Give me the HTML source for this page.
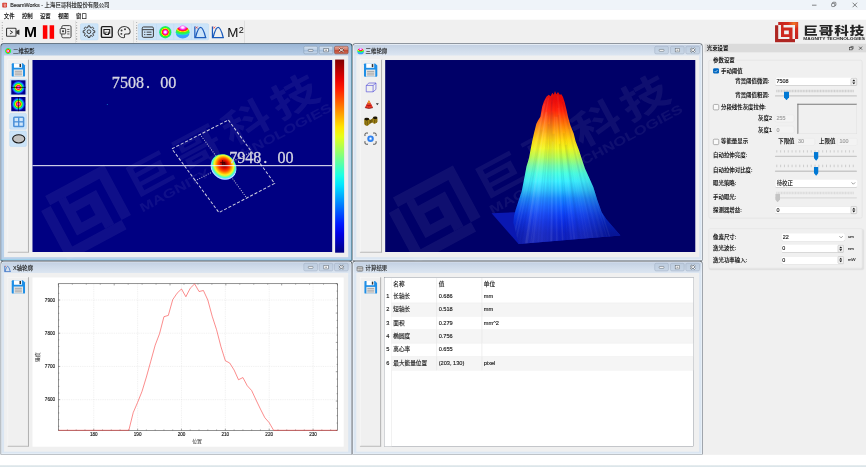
<!DOCTYPE html><html lang="zh-CN"><head><meta charset="utf-8"><title>BeamWorks - 上海巨哥科技股份有限公司</title><style>
html,body{margin:0;padding:0;background:#fff;overflow:hidden}
body{width:866px;height:467px;position:relative}
#root{position:absolute;left:0;top:0;width:1920px;height:1036px;transform-origin:0 0;
transform:scale(0.451042,0.451208);font:12px/16px "Liberation Sans","Noto Sans CJK SC",sans-serif;color:#000;background:#f0f0f0;overflow:hidden;filter:opacity(1)}
#root div,#root span,.a{position:absolute;box-sizing:border-box;white-space:nowrap}
.t,td{-webkit-text-stroke:.3px currentColor}
.a{display:block;overflow:visible}
.t{font-size:12px;line-height:16px;height:16px}
.r{text-align:right}
.sub{border:1px solid #6b7480;border-radius:7px 7px 0 0}
.act{background:linear-gradient(#98b3d3 0,#a9c2df 14px,#bbd0e8 30px,#b9d1ea 31px)}
.ina{background:linear-gradient(#bfcde0 0,#cfdbea 14px,#dfe8f3 30px,#dbe6f2 31px);border-color:#8c8f94}
.cl{background:#f0f0f0}
.wb{border:1px solid #8094ab;border-radius:4px;background:linear-gradient(rgba(255,255,255,.55),rgba(255,255,255,.18) 48%,rgba(150,175,205,.25) 52%,rgba(255,255,255,.3))}
.wbi{border:1px solid #a3b2c5;border-radius:4px;background:rgba(176,194,216,.38)}
.wbc{border:1px solid #7c3a30;border-radius:4px;background:linear-gradient(#e6a899,#d27462 48%,#c04a34 52%,#cf6a52)}
.stb{background:#f0f0f0;border-right:2px solid #a9a9a9;border-bottom:2px solid #b4b4b4;border-top:1px solid #fbfbfb;border-left:1px solid #fbfbfb}
.hl{background:#cce4f9;border:1px solid #b5d6f3;border-radius:3px}
.in{background:#fff;border:1px solid #e3e3e3;border-bottom:1px solid #8a8a8a;border-radius:4px}
.ind{background:#f3f3f3;border:1px solid #e6e6e6;border-radius:4px;color:#9c9c9c}
.gb{border:1px solid #dcdcdc;border-radius:4px}
.cb{border:1px solid #5c5c5c;border-radius:3px;background:#fafafa}
.cbc{border-radius:3px;background:#0067c0}
.gr{background:#c8c8c8;border-radius:2px}
.hd{background:#0078d4;clip-path:polygon(12% 0,88% 0,100% 6%,100% 66%,50% 100%,0 66%,0 6%)}
.hdd{background:#c4c4c4;clip-path:polygon(12% 0,88% 0,100% 6%,100% 66%,50% 100%,0 66%,0 6%)}
table{border-collapse:collapse;position:absolute;font:12.500px/16px "Liberation Sans","Noto Sans CJK SC",sans-serif;color:#1a1a1a}
td{padding:0 0 0 4px;height:30px;border-right:1px solid #dcdcdc;box-sizing:border-box}
</style></head><body><div id="root"><div style="left:0px;top:0px;width:1920px;height:22px;background:#eff4f9"></div><svg class="a" style="left:4.5px;top:6px" width="10.5" height="10.5" viewBox="0 0 10 10" ><rect width="10" height="10" rx="1.500" fill="#d5392e"/><path d="M2.500 3h5v4.500h-3.500v-2.500h2" fill="none" stroke="#fff" stroke-width="1"/></svg><div class="t" style="left:23px;top:3.5px;width:420.5px;height:16px;color:#222">BeamWorks - 上海巨哥科技股份有限公司</div><svg class="a" style="left:1791.5px;top:0px" width="128.5" height="22" viewBox="0 0 128 22" ><path d="M8 11.500H18" stroke="#222" stroke-width="1.2"/><rect x="51.500" y="7.500" width="7" height="7" rx="1.500" fill="none" stroke="#222" stroke-width="1.100"/><path d="M53.500 7.500V6.500a1.500 1.500 0 0 1 1.500-1.500h4.500a1.500 1.500 0 0 1 1.500 1.500v4.500a1.500 1.500 0 0 1-1.500 1.500h-1" fill="none" stroke="#222" stroke-width="1.100"/><path d="M98 6l10 10M108 6l-10 10" stroke="#222" stroke-width="1.2"/></svg><div style="left:0px;top:22px;width:1920px;height:22px;background:#fff"></div><div class="t" style="left:8.5px;top:27px;width:31px;height:16px;">文件</div><div class="t" style="left:48.5px;top:27px;width:31px;height:16px;">控制</div><div class="t" style="left:88.5px;top:27px;width:31px;height:16px;">设置</div><div class="t" style="left:128.5px;top:27px;width:31px;height:16px;">视图</div><div class="t" style="left:168.5px;top:27px;width:31px;height:16px;">窗口</div><div style="left:0px;top:44px;width:1920px;height:51px;background:#f0f0f0"></div><div style="left:4px;top:49px;width:2px;height:42.5px;background:repeating-linear-gradient(#a8a8a8 0,#a8a8a8 1.500px,#f0f0f0 1.500px,#f0f0f0 3.500px)"></div><div style="left:169px;top:49px;width:2px;height:42.5px;background:repeating-linear-gradient(#a8a8a8 0,#a8a8a8 1.500px,#f0f0f0 1.500px,#f0f0f0 3.500px)"></div><div style="left:302px;top:49px;width:2px;height:42.5px;background:repeating-linear-gradient(#a8a8a8 0,#a8a8a8 1.500px,#f0f0f0 1.500px,#f0f0f0 3.500px)"></div><div style="left:166.5px;top:46px;width:1.5px;height:48.5px;background:#c9c9c9"></div><div style="left:296px;top:46px;width:1px;height:48.5px;background:#c9c9c9"></div><div style="left:542px;top:46px;width:1px;height:48.5px;background:#c9c9c9"></div><svg class="a" style="left:13px;top:58.5px" width="32" height="25" viewBox="0 0 32 25" ><rect x="1.500" y="3.500" width="21" height="18" rx="2" fill="none" stroke="#3a3a3a" stroke-width="2.4"/><path d="M23 9.500l7-3v12l-7-3z" fill="#3a3a3a"/><path d="M9 8.500l6 4-6 4" fill="none" stroke="#3a3a3a" stroke-width="2.2"/></svg><div style="left:53px;top:51px;width:35.5px;height:39px;font:700 31.500px/38px 'Liberation Sans',sans-serif;color:#000;transform:scaleX(1.1);transform-origin:0 0">M</div><div style="left:95px;top:55.5px;width:10px;height:30.5px;background:#f00"></div><div style="left:110px;top:55.5px;width:10px;height:30.5px;background:#f00"></div><svg class="a" style="left:131.5px;top:55px" width="27" height="30.5" viewBox="0 0 27 30" ><rect x="5" y="1.500" width="20.5" height="27" rx="3" fill="none" stroke="#444" stroke-width="2.2"/><rect x="1.500" y="8" width="12" height="12" rx="1.500" fill="#f0f0f0" stroke="#444" stroke-width="2.2"/><rect x="5.500" y="12" width="4.500" height="4" fill="#444"/><path d="M17 10h5M17 15h5M17 20h5" stroke="#444" stroke-width="2"/></svg><div class="hl" style="left:177.5px;top:52px;width:40px;height:36.5px;"></div><svg class="a" style="left:182px;top:55px" width="30.5" height="30.5" viewBox="0 0 32 32" ><g transform="translate(16 16)"><polygon points="-2.47,-9.9 -2.13,-13.43 2.13,-13.43 2.47,-9.9 5.25,-8.74 7.99,-11 11,-7.99 8.74,-5.25 9.9,-2.47 13.43,-2.13 13.43,2.13 9.9,2.47 8.74,5.25 11,7.99 7.99,11 5.25,8.74 2.47,9.9 2.13,13.43 -2.13,13.43 -2.47,9.9 -5.25,8.74 -7.99,11 -11,7.99 -8.74,5.25 -9.9,2.47 -13.43,2.13 -13.43,-2.13 -9.9,-2.47 -8.74,-5.25 -11,-7.99 -7.99,-11 -5.25,-8.74" fill="none" stroke="#3c3c3c" stroke-width="2.300" stroke-linejoin="round"/><circle r="4.300" fill="none" stroke="#3c3c3c" stroke-width="2.200"/></g></svg><svg class="a" style="left:222.5px;top:56.5px" width="27.5" height="28" viewBox="0 0 30 30" ><rect x="2" y="2" width="26" height="26" rx="3" fill="none" stroke="#1c1c1c" stroke-width="3.400"/><path d="M8 9h14v9h-3v3h-8v-3h-3z" fill="none" stroke="#1c1c1c" stroke-width="2.600"/><path d="M11 14v4M15 14v4M19 14v4" stroke="#1c1c1c" stroke-width="1.500"/></svg><svg class="a" style="left:260px;top:56.5px" width="30.5" height="28.5" viewBox="0 0 32 30" ><path d="M16 2C8 2 2 8 2 15.500S8 28 14 28c3 0 3.500-2 2.800-3.800c-1-2.600 0.500-4.700 3.200-4.700h4c4 0 6-2.500 6-6C30 7 24 2 16 2z" fill="none" stroke="#3c3c3c" stroke-width="2.400"/><circle cx="10" cy="11" r="2.300" fill="#3c3c3c"/><circle cx="18" cy="8" r="2.300" fill="#3c3c3c"/><circle cx="9.500" cy="19" r="2.300" fill="#3c3c3c"/></svg><div class="hl" style="left:306px;top:52px;width:157px;height:36.5px;"></div><div style="left:346.5px;top:52.5px;width:1px;height:35.5px;background:#b9d8f3"></div><div style="left:384.5px;top:52.5px;width:1px;height:35.5px;background:#b9d8f3"></div><div style="left:423.5px;top:52.5px;width:1px;height:35.5px;background:#b9d8f3"></div><svg class="a" style="left:313.5px;top:57.5px" width="27.5" height="26.5" viewBox="0 0 30 28" ><rect x="1.500" y="1.500" width="27" height="25" rx="3" fill="none" stroke="#3a3a3a" stroke-width="2.400"/><path d="M1.500 8h27" stroke="#3a3a3a" stroke-width="2.400"/><path d="M6 14h3M6 20h3" stroke="#3a3a3a" stroke-width="2.400"/><path d="M12 14h12M12 20h12" stroke="#3a3a3a" stroke-width="2.400"/></svg><svg class="a" style="left:351.5px;top:56.5px" width="29" height="28.5" viewBox="0 0 32 32" ><defs><radialGradient id="g1"><stop offset="0" stop-color="#ffd0ff"/><stop offset="0.14" stop-color="#ff40ff"/><stop offset="0.3" stop-color="#ff2020"/><stop offset="0.42" stop-color="#ffe000"/><stop offset="0.55" stop-color="#20e020"/><stop offset="0.68" stop-color="#00e0e0"/><stop offset="0.82" stop-color="#2040ff"/><stop offset="1" stop-color="#00008a"/></radialGradient></defs><defs><radialGradient id="g2"><stop offset="0" stop-color="#ffffff"/><stop offset="0.14" stop-color="#ffe0ff"/><stop offset="0.3" stop-color="#ff30ff"/><stop offset="0.42" stop-color="#ff1060"/><stop offset="0.5" stop-color="#ff3010"/><stop offset="0.6" stop-color="#fff000"/><stop offset="0.7" stop-color="#40f020"/><stop offset="0.9" stop-color="#20f060"/><stop offset="1" stop-color="#30e0d0"/></radialGradient></defs><circle cx="16" cy="16" r="15.5" fill="url(#g2)"/></svg><svg class="a" style="left:389px;top:55px" width="32" height="31.5" viewBox="0 0 32 30" ><defs><radialGradient id="g3" gradientUnits="userSpaceOnUse" cx="16" cy="5" r="26" gradientTransform="translate(0 1.500) scale(1 .7)"><stop offset="0" stop-color="#ffffff"/><stop offset="0.12" stop-color="#ffd0ff"/><stop offset="0.26" stop-color="#ff28f0"/><stop offset="0.38" stop-color="#ff1040"/><stop offset="0.46" stop-color="#ff5000"/><stop offset="0.53" stop-color="#fff000"/><stop offset="0.62" stop-color="#50f020"/><stop offset="0.8" stop-color="#20f070"/><stop offset="0.92" stop-color="#20d8e0"/><stop offset="1" stop-color="#38a0ff"/></radialGradient></defs><ellipse cx="16" cy="16" rx="15.500" ry="13.600" fill="url(#g3)"/><circle cx="16" cy="7.500" r="7" fill="url(#g3)"/></svg><svg class="a" style="left:428px;top:56.5px" width="31.5" height="29" viewBox="0 0 32 32" ><path d="M3 2V29H31" fill="none" stroke="#1c5cbc" stroke-width="3"/><path d="M4.500 29Q17 -21 29.500 29" fill="none" stroke="#1c5cbc" stroke-width="3.100"/><path d="M5 2l5 5M10 2l-5 5" stroke="#e03030" stroke-width="1.7"/></svg><svg class="a" style="left:466.5px;top:56.5px" width="31.5" height="29" viewBox="0 0 32 32" ><path d="M3 2V29H31" fill="none" stroke="#1c5cbc" stroke-width="3"/><path d="M4.500 29Q17 -21 29.500 29" fill="none" stroke="#1c5cbc" stroke-width="3.100"/><path d="M5 2l5 5M10 2l-5 5" stroke="#e03030" stroke-width="1.7"/></svg><div style="left:504px;top:52.5px;width:43.5px;height:36.5px;font:400 28px/37px 'Liberation Sans',sans-serif;color:#111;transform:scaleX(1.06);transform-origin:0 0">M<span style="position:relative;font-size:19px;top:-7.500px;left:0.500px">2</span></div><svg class="a" style="left:1718px;top:47.5px" width="203" height="46" viewBox="0 0 91.7 20.8" ><defs><radialGradient id="g4" cx="19" cy="2" r="13" gradientUnits="userSpaceOnUse"><stop offset="0" stop-color="#f07a28"/><stop offset=".45" stop-color="#d62a1c"/><stop offset="1" stop-color="#c42420"/></radialGradient></defs><path d="M0.1 3.7H3.3V17.5H20.1V20.65H0.1Z" fill="#ae2622"/><path d="M3.3 0.3H23.3V17.5H20.1V3.45H3.3Z" fill="url(#g4)"/><path d="M6.1 3.4H8.6V5.95H17.6V17.5H14.5V15.3H6.1ZM9.2 8.75H13.9V12.5H9.2Z" fill="#cf2a20" fill-rule="evenodd"/><text transform="translate(28.5 13.6) scale(1.26 1)" font-family='"Noto Sans CJK SC",sans-serif' font-weight="800" font-size="11.700" fill="#262626">巨</text><text transform="translate(43.95 13.6) scale(1.26 1)" font-family='"Noto Sans CJK SC",sans-serif' font-weight="800" font-size="11.700" fill="#262626">哥</text><text transform="translate(59.4 13.6) scale(1.26 1)" font-family='"Noto Sans CJK SC",sans-serif' font-weight="800" font-size="11.700" fill="#262626">科</text><text transform="translate(74.85 13.6) scale(1.26 1)" font-family='"Noto Sans CJK SC",sans-serif' font-weight="800" font-size="11.700" fill="#262626">技</text><text x="28.5" y="18.45" font-family='"Liberation Sans",sans-serif' font-weight="700" font-size="3.700" textLength="61.79" lengthAdjust="spacingAndGlyphs" fill="#262626">MAGNITY TECHNOLOGIES</text></svg><div class="sub act" style="left:1px;top:96px;width:779.5px;height:481.5px;border:0;box-shadow:inset 0 0 0 1.500px #38434e,inset -3px -3px 0 0 #86d2ec"><div class="cl" style="left:8px;top:27px;width:762.5px;height:446.5px;"></div><svg class="a" style="left:10px;top:10px" width="14" height="14" viewBox="0 0 32 32" ><defs><radialGradient id="g5"><stop offset="0" stop-color="#ffd0ff"/><stop offset="0.14" stop-color="#ff40ff"/><stop offset="0.3" stop-color="#ff2020"/><stop offset="0.42" stop-color="#ffe000"/><stop offset="0.55" stop-color="#20e020"/><stop offset="0.68" stop-color="#00e0e0"/><stop offset="0.82" stop-color="#2040ff"/><stop offset="1" stop-color="#00008a"/></radialGradient></defs><defs><radialGradient id="g6"><stop offset="0" stop-color="#ffffff"/><stop offset="0.14" stop-color="#ffe0ff"/><stop offset="0.3" stop-color="#ff30ff"/><stop offset="0.42" stop-color="#ff1060"/><stop offset="0.5" stop-color="#ff3010"/><stop offset="0.6" stop-color="#fff000"/><stop offset="0.7" stop-color="#40f020"/><stop offset="0.9" stop-color="#20f060"/><stop offset="1" stop-color="#30e0d0"/></radialGradient></defs><circle cx="16" cy="16" r="15.5" fill="url(#g6)"/></svg><div class="t" style="left:28px;top:9.5px;width:149.5px;height:16px;color:#1b1b1b">二维投影</div><svg class="a" style="left:671.5px;top:5.5px" width="31.5" height="18" viewBox="0 0 31.500 18" ><defs><linearGradient id="g7" x1="0" y1="0" x2="0" y2="1"><stop offset="0" stop-color="#fff" stop-opacity=".55"/><stop offset=".48" stop-color="#fff" stop-opacity=".2"/><stop offset=".52" stop-color="#9ab4d2" stop-opacity=".3"/><stop offset="1" stop-color="#fff" stop-opacity=".3"/></linearGradient></defs><rect x=".6" y=".6" width="30.300" height="16.800" rx="3" fill="url(#g7)" stroke="#7e93ab" stroke-width="1.100"/><rect x="10.500" y="7.500" width="10.500" height="4.200" rx="1.200" fill="#f8f8f8" stroke="#4a5866" stroke-width="1.2"/></svg><svg class="a" style="left:705.5px;top:5.5px" width="31.5" height="18" viewBox="0 0 31.500 18" ><defs><linearGradient id="g8" x1="0" y1="0" x2="0" y2="1"><stop offset="0" stop-color="#fff" stop-opacity=".55"/><stop offset=".48" stop-color="#fff" stop-opacity=".2"/><stop offset=".52" stop-color="#9ab4d2" stop-opacity=".3"/><stop offset="1" stop-color="#fff" stop-opacity=".3"/></linearGradient></defs><rect x=".6" y=".6" width="30.300" height="16.800" rx="3" fill="url(#g8)" stroke="#7e93ab" stroke-width="1.100"/><rect x="11" y="5" width="10" height="8" fill="#f8f8f8" stroke="#4a5866" stroke-width="1.2"/><rect x="14" y="8" width="4" height="2.500" fill="#4a5866" opacity=".7"/></svg><svg class="a" style="left:740px;top:5.5px" width="31.5" height="18" viewBox="0 0 31.500 18" ><defs><linearGradient id="g9" x1="0" y1="0" x2="0" y2="1"><stop offset="0" stop-color="#e8ab9c"/><stop offset=".48" stop-color="#d27562"/><stop offset=".52" stop-color="#c04a34"/><stop offset="1" stop-color="#d06c54"/></linearGradient></defs><rect x=".6" y=".6" width="30.300" height="16.800" rx="3" fill="url(#g9)" stroke="#7c3a30" stroke-width="1.100"/><path d="M11 5l10 8M21 5l-10 8" stroke="#6a2a20" stroke-width="4.2"/><path d="M11 5l10 8M21 5l-10 8" stroke="#f8f8f8" stroke-width="2.2"/></svg><div class="stb" style="left:16px;top:36px;width:47px;height:427.5px;"></div><svg class="a" style="left:24.5px;top:44px" width="29.5" height="30" viewBox="0 0 30 30" ><path d="M2 0H25L30 5V28a2 2 0 0 1-2 2H2a2 2 0 0 1-2-2V2a2 2 0 0 1 2-2z" fill="#1f8fe6"/><rect x="5" y="0" width="18" height="10" fill="#fff"/><rect x="17.5" y="1.5" width="3.5" height="7" fill="#333"/><rect x="4.500" y="14" width="21" height="16" fill="#e6e6e6"/><path d="M7 18h16M7 22h16M7 26h16" stroke="#8a8a8a" stroke-width="1.6"/></svg><div class="hl" style="left:21px;top:78.5px;width:37.5px;height:36.5px;"></div><svg class="a" style="left:24px;top:81.5px" width="31.5" height="31.5" viewBox="0 0 32 32" ><defs><radialGradient id="g10"><stop offset="0" stop-color="#ffd0ff"/><stop offset="0.14" stop-color="#ff40ff"/><stop offset="0.3" stop-color="#ff2020"/><stop offset="0.42" stop-color="#ffe000"/><stop offset="0.55" stop-color="#20e020"/><stop offset="0.68" stop-color="#00e0e0"/><stop offset="0.82" stop-color="#2040ff"/><stop offset="1" stop-color="#00008a"/></radialGradient></defs><rect width="32" height="32" fill="#00008a"/><circle cx="16" cy="16" r="15.5" fill="url(#g10)"/><path d="M0 16H32" stroke="#000" stroke-width="1.6"/></svg><svg class="a" style="left:24px;top:119px" width="31.5" height="31.5" viewBox="0 0 32 32" ><defs><radialGradient id="g11"><stop offset="0" stop-color="#ffd0ff"/><stop offset="0.14" stop-color="#ff40ff"/><stop offset="0.3" stop-color="#ff2020"/><stop offset="0.42" stop-color="#ffe000"/><stop offset="0.55" stop-color="#20e020"/><stop offset="0.68" stop-color="#00e0e0"/><stop offset="0.82" stop-color="#2040ff"/><stop offset="1" stop-color="#00008a"/></radialGradient></defs><rect width="32" height="32" fill="#00008a"/><circle cx="16" cy="16" r="15.5" fill="url(#g11)"/><path d="M16 0V32" stroke="#000" stroke-width="1.6"/></svg><div class="hl" style="left:20px;top:154.5px;width:38px;height:36px;"></div><svg class="a" style="left:26.5px;top:160.5px" width="27" height="26" viewBox="0 0 28 27" ><rect x="1" y="1" width="26" height="25" rx="3.500" fill="#4a90d9"/><rect x="4.500" y="4.500" width="8" height="7.500" fill="#cfe6fb"/><rect x="15.500" y="4.500" width="8" height="7.500" fill="#cfe6fb"/><rect x="4.500" y="15" width="8" height="7.500" fill="#cfe6fb"/><rect x="15.500" y="15" width="8" height="7.500" fill="#cfe6fb"/></svg><div class="hl" style="left:20px;top:193.5px;width:38px;height:35px;"></div><svg class="a" style="left:24.5px;top:200px" width="31" height="23.5" viewBox="0 0 31 23" ><ellipse cx="15.500" cy="11.500" rx="13.500" ry="9.200" fill="#c2c2c2" stroke="#161616" stroke-width="2.400"/></svg><svg class="a" style="left:70.5px;top:37px" width="664.5" height="425.5" viewBox="32.1 60.0 299.8 191.8" preserveAspectRatio="none"><rect x="32.1" y="60.0" width="299.8" height="191.8" fill="#000082"/><g transform="translate(223 132) rotate(-28.2) scale(3.33) translate(-59.5 -8.7)" opacity="0.06"><path d="M0.1 3.7H3.3V17.5H20.1V20.65H0.1Z" fill="#fff"/><path d="M3.3 0.3H23.3V17.5H20.1V3.45H3.3Z" fill="#fff"/><path d="M6.1 3.4H8.6V5.95H17.6V17.5H14.5V15.3H6.1ZM9.2 8.75H13.9V12.5H9.2Z" fill="#fff" fill-rule="evenodd"/><text transform="translate(26.7 13.6) scale(1.24 1)" font-family='"Noto Sans CJK SC",sans-serif' font-weight="700" font-size="11.700" fill="#fff">巨</text><text transform="translate(43.2 13.6) scale(1.24 1)" font-family='"Noto Sans CJK SC",sans-serif' font-weight="700" font-size="11.700" fill="#fff">哥</text><text transform="translate(59.7 13.6) scale(1.24 1)" font-family='"Noto Sans CJK SC",sans-serif' font-weight="700" font-size="11.700" fill="#fff">科</text><text transform="translate(76.2 13.6) scale(1.24 1)" font-family='"Noto Sans CJK SC",sans-serif' font-weight="700" font-size="11.700" fill="#fff">技</text><text x="26.7" y="18.45" font-family='"Liberation Sans",sans-serif' font-weight="700" font-size="3.700" textLength="64.94" lengthAdjust="spacingAndGlyphs" fill="#fff">MAGNITY TECHNOLOGIES</text></g><polygon points="228.1,119.9 274.3,183.3 218.6,212.4 171.6,148.7" fill="none" stroke="#cdcddf" stroke-width="1" stroke-dasharray="3.1 1.800"/><path d="M199.85 134.3L246.45 197.85" stroke="#c6c6da" stroke-width="1.050" stroke-linecap="round" stroke-dasharray=".1 2.300"/><path d="M195.1 180.55L251.2 151.6" stroke="#c6c6da" stroke-width="1.050" stroke-linecap="round" stroke-dasharray=".1 2.300"/><defs><radialGradient id="g12" cx=".46" cy=".46" r=".54" fx=".42" fy=".38"><stop offset="0" stop-color="#4a0000"/><stop offset="0.1" stop-color="#8a0000"/><stop offset="0.3" stop-color="#e81000"/><stop offset="0.45" stop-color="#ff5000"/><stop offset="0.58" stop-color="#ffb000"/><stop offset="0.68" stop-color="#fff020"/><stop offset="0.76" stop-color="#a0ff60"/><stop offset="0.83" stop-color="#40ffd0"/><stop offset="0.885" stop-color="#70d8ff"/><stop offset="0.935" stop-color="#cfe6ff"/><stop offset="0.975" stop-color="#4060f0"/><stop offset="1" stop-color="#000082"/></radialGradient></defs><g transform="translate(223.2 167.300) rotate(52)"><ellipse rx="13.800" ry="12.300" fill="url(#g12)"/><ellipse cx="-9" cy="-4" rx="5" ry="5" fill="url(#g12)" opacity=".0"/></g><path d="M219.8 162.500h5M222.300 160v5" stroke="#200000" stroke-width=".8" opacity=".8"/><rect x="32.1" y="165.05" width="299.8" height="1" fill="#f2f2fa"/><text x="111.5 119.55 127.6 135.65 145.63 151.75 159.8 167.85" y="87.6" font-family='"Liberation Serif",serif' font-size="16.1" fill="#d6d6e2" stroke="#d6d6e2" stroke-width=".3">7508. 00</text><text x="228.9 236.95 245 253.05 263.03 269.15 277.2 285.25" y="163.2" font-family='"Liberation Serif",serif' font-size="16.1" fill="#d6d6e2" stroke="#d6d6e2" stroke-width=".3">7948. 00</text><rect x="106.500" y="104" width="1" height=".7" fill="#1890d8"/></svg><svg class="a" style="left:742px;top:35.5px" width="20" height="428" viewBox="0 0 9 193" preserveAspectRatio="none"><defs><linearGradient id="g13" x1="0" y1="0" x2="0" y2="1"><stop offset="0.0" stop-color="#800000"/><stop offset="0.05" stop-color="#b30000"/><stop offset="0.1" stop-color="#e50000"/><stop offset="0.15" stop-color="#ff1a00"/><stop offset="0.2" stop-color="#ff4c00"/><stop offset="0.25" stop-color="#ff8000"/><stop offset="0.3" stop-color="#ffb300"/><stop offset="0.35" stop-color="#ffe500"/><stop offset="0.4" stop-color="#e5ff1a"/><stop offset="0.45" stop-color="#b3ff4c"/><stop offset="0.5" stop-color="#80ff80"/><stop offset="0.55" stop-color="#4cffb3"/><stop offset="0.6" stop-color="#1affe5"/><stop offset="0.65" stop-color="#00e5ff"/><stop offset="0.7" stop-color="#00b3ff"/><stop offset="0.75" stop-color="#0080ff"/><stop offset="0.8" stop-color="#004cff"/><stop offset="0.85" stop-color="#001aff"/><stop offset="0.9" stop-color="#0000e5"/><stop offset="0.95" stop-color="#0000b3"/><stop offset="1.0" stop-color="#000080"/></linearGradient></defs><rect width="9" height="193" fill="url(#g13)"/></svg></div><div class="sub ina" style="left:780.5px;top:96px;width:777px;height:481.5px;border:0;box-shadow:inset 0 0 0 1.500px #54595f,inset 0 0 0 3px #eef4fa"><div class="cl" style="left:9px;top:27px;width:760.5px;height:446.5px;"></div><svg class="a" style="left:11.5px;top:10px" width="15" height="15" viewBox="0 0 32 30" ><defs><radialGradient id="g14" gradientUnits="userSpaceOnUse" cx="16" cy="5" r="26" gradientTransform="translate(0 1.500) scale(1 .7)"><stop offset="0" stop-color="#ffffff"/><stop offset="0.12" stop-color="#ffd0ff"/><stop offset="0.26" stop-color="#ff28f0"/><stop offset="0.38" stop-color="#ff1040"/><stop offset="0.46" stop-color="#ff5000"/><stop offset="0.53" stop-color="#fff000"/><stop offset="0.62" stop-color="#50f020"/><stop offset="0.8" stop-color="#20f070"/><stop offset="0.92" stop-color="#20d8e0"/><stop offset="1" stop-color="#38a0ff"/></radialGradient></defs><ellipse cx="16" cy="16" rx="15.500" ry="13.600" fill="url(#g14)"/><circle cx="16" cy="7.500" r="7" fill="url(#g14)"/></svg><div class="t" style="left:30px;top:9.5px;width:147.5px;height:16px;color:#1b1b1b">三维轮廓</div><svg class="a" style="left:670.5px;top:5.5px" width="31.5" height="18" viewBox="0 0 31.500 18" ><rect x=".6" y=".6" width="30.300" height="16.800" rx="3" fill="#b0c2d8" fill-opacity=".38" stroke="#a0afc3" stroke-width="1.100"/><rect x="10.500" y="7.500" width="10.500" height="4.200" rx="1.200" fill="#fdfdfd" stroke="#5d6670" stroke-width="1.2"/></svg><svg class="a" style="left:705px;top:5.5px" width="31.5" height="18" viewBox="0 0 31.500 18" ><rect x=".6" y=".6" width="30.300" height="16.800" rx="3" fill="#b0c2d8" fill-opacity=".38" stroke="#a0afc3" stroke-width="1.100"/><rect x="11" y="5" width="10" height="8" fill="#fdfdfd" stroke="#5d6670" stroke-width="1.2"/><rect x="14" y="8" width="4" height="2.500" fill="#5d6670" opacity=".7"/></svg><svg class="a" style="left:739px;top:5.5px" width="31.5" height="18" viewBox="0 0 31.500 18" ><rect x=".6" y=".6" width="30.300" height="16.800" rx="3" fill="#b0c2d8" fill-opacity=".38" stroke="#a0afc3" stroke-width="1.100"/><path d="M11 5l10 8M21 5l-10 8" stroke="#5d6670" stroke-width="4.2"/><path d="M11 5l10 8M21 5l-10 8" stroke="#fdfdfd" stroke-width="2.2"/></svg><div class="stb" style="left:17.5px;top:36px;width:48.5px;height:427.5px;"></div><svg class="a" style="left:26.5px;top:44px" width="29.5" height="30.5" viewBox="0 0 30 30" ><path d="M2 0H25L30 5V28a2 2 0 0 1-2 2H2a2 2 0 0 1-2-2V2a2 2 0 0 1 2-2z" fill="#1f8fe6"/><rect x="5" y="0" width="18" height="10" fill="#fff"/><rect x="17.5" y="1.5" width="3.5" height="7" fill="#333"/><rect x="4.500" y="14" width="21" height="16" fill="#e6e6e6"/><path d="M7 18h16M7 22h16M7 26h16" stroke="#8a8a8a" stroke-width="1.6"/></svg><svg class="a" style="left:30.5px;top:86.5px" width="23.5" height="21.5" viewBox="0 0 24 22" ><path d="M1 6.500H16.500V21H1zM1 6.500L7 1H23L16.500 6.500M23 1V15.500L16.500 21" fill="none" stroke="#4a46d8" stroke-width="1.400"/></svg><svg class="a" style="left:27.5px;top:125px" width="20" height="20" viewBox="0 0 20 20" ><path d="M10 1L1 17.500Q10 21.500 19 17.500Z" fill="#e02020"/><path d="M10 1L6.500 7.500Q10 9 13.500 7.500Z" fill="#e8a030"/><path d="M4.500 11.500Q10 14 15.500 11.500" stroke="#8c1010" stroke-width="1.500" fill="none"/><path d="M7 9.500h2v2h-2zM11.500 9.500h2v2h-2zM5 15h2.500v2h-2.500zM9.500 15.500h2.500v2h-2.500zM13.500 15h2.500v2h-2.500z" fill="#f07030"/><path d="M1 17.500Q10 21.500 19 17.500" stroke="#500808" stroke-width="1.200" fill="none"/></svg><svg class="a" style="left:52px;top:132.5px" width="7" height="4" viewBox="0 0 6 3.600" ><path d="M0 0H6L3 3.600Z" fill="#333"/></svg><svg class="a" style="left:25.5px;top:160.5px" width="32.5" height="23" viewBox="0 0 32 22" ><path d="M2 7Q7 2 12 6L15 10L21 3Q26 -1 30 4V13Q26 18 21 15L17 12L12 19Q7 23 2 18Z" fill="#7d6410"/><path d="M2 8Q7 12 12 7V19Q7 23 2 18ZM21 5Q26 8 30 5V13Q26 18 21 15Z" fill="#a88a18"/><path d="M5 11V20M9 11V20M24 7.500V15.500M27.500 7V14.500" stroke="#4a3a08" stroke-width="1.300"/><ellipse cx="7" cy="6.500" rx="5.200" ry="3" fill="#1c1606"/><ellipse cx="25.500" cy="3.800" rx="4.800" ry="2.800" fill="#1c1606"/><path d="M12 9L20 6L21 13L13 17Z" fill="#8f7414"/><path d="M15 8.500V15.500M18 7.500V14" stroke="#4a3a08" stroke-width="1.200"/></svg><svg class="a" style="left:26.5px;top:197px" width="29" height="28.5" viewBox="0 0 30 30" ><path d="M2 9V5a3 3 0 0 1 3-3h4M21 2h4a3 3 0 0 1 3 3v4M28 21v4a3 3 0 0 1-3 3h-4M9 28H5a3 3 0 0 1-3-3v-4" fill="none" stroke="#444" stroke-width="2.200"/><circle cx="15" cy="15" r="7.600" fill="#2f80ee"/><circle cx="15" cy="15" r="3.600" fill="#8cc0ff"/><circle cx="15" cy="15" r="1.800" fill="#fff"/></svg><svg class="a" style="left:73px;top:36.5px" width="687.5" height="425.5" viewBox="384.8 59.8 310.1 191.9" preserveAspectRatio="none"><defs><linearGradient id="g15" gradientUnits="userSpaceOnUse" x1="0" y1="91.0" x2="0" y2="244.0"><stop offset="0.000" stop-color="#d80000"/><stop offset="0.059" stop-color="#ea0000"/><stop offset="0.124" stop-color="#ff1800"/><stop offset="0.190" stop-color="#ff5a00"/><stop offset="0.255" stop-color="#ff9a00"/><stop offset="0.320" stop-color="#ffd800"/><stop offset="0.373" stop-color="#f0f810"/><stop offset="0.431" stop-color="#b4ff48"/><stop offset="0.484" stop-color="#70ffa0"/><stop offset="0.536" stop-color="#40ffe0"/><stop offset="0.588" stop-color="#30f0ff"/><stop offset="0.647" stop-color="#20c0ff"/><stop offset="0.699" stop-color="#1084ff"/><stop offset="0.752" stop-color="#0c5cff"/><stop offset="0.804" stop-color="#083cf4"/><stop offset="0.856" stop-color="#0628e0"/><stop offset="0.922" stop-color="#081cc4"/><stop offset="1.000" stop-color="#0a18b4"/></linearGradient><linearGradient id="g16" gradientUnits="userSpaceOnUse" x1="510" y1="0" x2="606" y2="0"><stop offset="0" stop-color="#000" stop-opacity=".10"/><stop offset=".3" stop-color="#fff" stop-opacity=".10"/><stop offset=".55" stop-color="#fff" stop-opacity=".02"/><stop offset="1" stop-color="#000" stop-opacity=".22"/></linearGradient></defs><rect x="384.8" y="59.8" width="310.1" height="191.9" fill="#000068"/><g transform="translate(574.5 132.2) rotate(-28.2) scale(3.4) translate(-59.5 -8.7)" opacity="0.06"><path d="M0.1 3.7H3.3V17.5H20.1V20.65H0.1Z" fill="#fff"/><path d="M3.3 0.3H23.3V17.5H20.1V3.45H3.3Z" fill="#fff"/><path d="M6.1 3.4H8.6V5.95H17.6V17.5H14.5V15.3H6.1ZM9.2 8.75H13.9V12.5H9.2Z" fill="#fff" fill-rule="evenodd"/><text transform="translate(26.7 13.6) scale(1.24 1)" font-family='"Noto Sans CJK SC",sans-serif' font-weight="700" font-size="11.700" fill="#fff">巨</text><text transform="translate(42.85 13.6) scale(1.24 1)" font-family='"Noto Sans CJK SC",sans-serif' font-weight="700" font-size="11.700" fill="#fff">哥</text><text transform="translate(59 13.6) scale(1.24 1)" font-family='"Noto Sans CJK SC",sans-serif' font-weight="700" font-size="11.700" fill="#fff">科</text><text transform="translate(75.15 13.6) scale(1.24 1)" font-family='"Noto Sans CJK SC",sans-serif' font-weight="700" font-size="11.700" fill="#fff">技</text><text x="26.7" y="18.45" font-family='"Liberation Sans",sans-serif' font-weight="700" font-size="3.700" textLength="63.89" lengthAdjust="spacingAndGlyphs" fill="#fff">MAGNITY TECHNOLOGIES</text></g><path d="M491.200 213L518.200 243.800L620 235.200L596 208.500Z" fill="#0a18b2"/><defs><clipPath id="g17"><path d="M554.6 90.8L553.4 94.5L552 92.6L550.2 96L548.4 94.6L546 96.6L543.6 101L541.8 106.2L540.6 113L540 116.6L537.5 120.5L535.9 123.8L533.6 133L531.7 141.5L528.6 158.1L526.1 166.2L523.5 180L521.3 191.2L518 201L515.1 209.9L513.6 216L513 222.4L518.2 243.8L620 235.2L606 219L601.3 212L597 200L593 187L589 178L584.7 168.5L581.5 159L578.5 149.8L575.2 141L573.3 133.2L570 125L567.6 116.6L566 109L564.3 102L562.6 96.8L561 94L559.4 94.4L557.6 91.8L556 94Z"/></clipPath></defs><path d="M554.6 90.8L553.4 94.5L552 92.6L550.2 96L548.4 94.6L546 96.6L543.6 101L541.8 106.2L540.6 113L540 116.6L537.5 120.5L535.9 123.8L533.6 133L531.7 141.5L528.6 158.1L526.1 166.2L523.5 180L521.3 191.2L518 201L515.1 209.9L513.6 216L513 222.4L518.2 243.8L620 235.2L606 219L601.3 212L597 200L593 187L589 178L584.7 168.5L581.5 159L578.5 149.8L575.2 141L573.3 133.2L570 125L567.6 116.6L566 109L564.3 102L562.6 96.8L561 94L559.4 94.4L557.6 91.8L556 94Z" fill="url(#g15)"/><path d="M554.6 90.8L553.4 94.5L552 92.6L550.2 96L548.4 94.6L546 96.6L543.6 101L541.8 106.2L540.6 113L540 116.6L537.5 120.5L535.9 123.8L533.6 133L531.7 141.5L528.6 158.1L526.1 166.2L523.5 180L521.3 191.2L518 201L515.1 209.9L513.6 216L513 222.4L518.2 243.8L620 235.2L606 219L601.3 212L597 200L593 187L589 178L584.7 168.5L581.5 159L578.5 149.8L575.2 141L573.3 133.2L570 125L567.6 116.6L566 109L564.3 102L562.6 96.8L561 94L559.4 94.4L557.6 91.8L556 94Z" fill="url(#g16)"/><g clip-path="url(#g17)"><path d="M544.12 103.3L511.65 244" stroke="#fff" stroke-opacity="0.06" stroke-width="1.86" fill="none"/><path d="M545.91 98.19L514.73 244" stroke="#fff" stroke-opacity="0.05" stroke-width="1.69" fill="none"/><path d="M546.02 99.99L517.14 244" stroke="#001060" stroke-opacity="0.05" stroke-width="1.20" fill="none"/><path d="M541.24 129.51L520.45 244" stroke="#001060" stroke-opacity="0.07" stroke-width="1.63" fill="none"/><path d="M548 97.56L524.95 244" stroke="#fff" stroke-opacity="0.07" stroke-width="1.23" fill="none"/><path d="M546.05 111.97L526.24 244" stroke="#fff" stroke-opacity="0.07" stroke-width="1.93" fill="none"/><path d="M546.7 115.48L530.28 244" stroke="#fff" stroke-opacity="0.05" stroke-width="1.10" fill="none"/><path d="M545.32 132.42L532.41 244" stroke="#fff" stroke-opacity="0.05" stroke-width="1.94" fill="none"/><path d="M548.73 111.49L535.91 244" stroke="#001060" stroke-opacity="0.06" stroke-width="1.39" fill="none"/><path d="M548.61 123.89L539.15 244" stroke="#001060" stroke-opacity="0.07" stroke-width="1.46" fill="none"/><path d="M551.22 101.49L542.96 244" stroke="#001060" stroke-opacity="0.05" stroke-width="1.24" fill="none"/><path d="M551.85 97.16L544.98 244" stroke="#001060" stroke-opacity="0.06" stroke-width="1.92" fill="none"/><path d="M552.17 112.26L548.75 244" stroke="#001060" stroke-opacity="0.06" stroke-width="1.93" fill="none"/><path d="M552.35 141.2L550.91 244" stroke="#fff" stroke-opacity="0.07" stroke-width="2.06" fill="none"/><path d="M553.32 133.58L553.12 244" stroke="#001060" stroke-opacity="0.06" stroke-width="2.32" fill="none"/><path d="M554.37 116.22L556.57 244" stroke="#fff" stroke-opacity="0.06" stroke-width="1.74" fill="none"/><path d="M554.7 101.44L559.34 244" stroke="#001060" stroke-opacity="0.03" stroke-width="1.21" fill="none"/><path d="M556.14 116.5L562.5 244" stroke="#fff" stroke-opacity="0.07" stroke-width="1.72" fill="none"/><path d="M559.13 143.59L566.1 244" stroke="#001060" stroke-opacity="0.07" stroke-width="1.45" fill="none"/><path d="M557.87 114.73L568.83 244" stroke="#001060" stroke-opacity="0.07" stroke-width="1.24" fill="none"/><path d="M557.9 107.76L571.35 244" stroke="#fff" stroke-opacity="0.04" stroke-width="1.94" fill="none"/><path d="M557.2 95.23L574.53 244" stroke="#fff" stroke-opacity="0.05" stroke-width="1.91" fill="none"/><path d="M563.37 132.98L578.91 244" stroke="#001060" stroke-opacity="0.05" stroke-width="2.08" fill="none"/><path d="M565.55 144.47L580.11 244" stroke="#001060" stroke-opacity="0.06" stroke-width="2.28" fill="none"/><path d="M562.54 116.94L583.78 244" stroke="#001060" stroke-opacity="0.03" stroke-width="1.10" fill="none"/><path d="M561.33 106.48L586.13 244" stroke="#fff" stroke-opacity="0.03" stroke-width="1.08" fill="none"/><path d="M561.39 103.32L589 244" stroke="#fff" stroke-opacity="0.03" stroke-width="1.04" fill="none"/><path d="M568.2 128.77L593.75 244" stroke="#fff" stroke-opacity="0.03" stroke-width="1.56" fill="none"/><path d="M562.53 101.76L595.73 244" stroke="#001060" stroke-opacity="0.07" stroke-width="1.75" fill="none"/><path d="M562.7 99.72L598.97 244" stroke="#fff" stroke-opacity="0.03" stroke-width="1.42" fill="none"/><path d="M564.6 103.88L602.66 244" stroke="#001060" stroke-opacity="0.03" stroke-width="1.85" fill="none"/><path d="M570.95 124.87L604.29 244" stroke="#fff" stroke-opacity="0.03" stroke-width="2.57" fill="none"/><path d="M575.08 133.29L608.73 244" stroke="#fff" stroke-opacity="0.04" stroke-width="1.27" fill="none"/><path d="M573.25 124.29L611.54 244" stroke="#fff" stroke-opacity="0.06" stroke-width="1.36" fill="none"/></g></svg></div><div class="sub ina" style="left:1px;top:577.5px;width:779.5px;height:430.5px;border:0;box-shadow:inset 0 0 0 1.500px #54595f,inset 0 0 0 3px #eef4fa"><div class="cl" style="left:8px;top:27px;width:762.5px;height:396px;"></div><svg class="a" style="left:8px;top:10px" width="15" height="15.5" viewBox="0 0 32 32" ><path d="M3 2V29H31" fill="none" stroke="#1c5cbc" stroke-width="3"/><path d="M4.500 29Q17 -21 29.500 29" fill="none" stroke="#1c5cbc" stroke-width="3.100"/><path d="M5 2l5 5M10 2l-5 5" stroke="#e03030" stroke-width="1.7"/></svg><div class="t" style="left:28px;top:9.5px;width:149.5px;height:16px;color:#1b1b1b">X轴轮廓</div><svg class="a" style="left:671.5px;top:5.5px" width="31.5" height="18" viewBox="0 0 31.500 18" ><rect x=".6" y=".6" width="30.300" height="16.800" rx="3" fill="#b0c2d8" fill-opacity=".38" stroke="#a0afc3" stroke-width="1.100"/><rect x="10.500" y="7.500" width="10.500" height="4.200" rx="1.200" fill="#fdfdfd" stroke="#5d6670" stroke-width="1.2"/></svg><svg class="a" style="left:705.5px;top:5.5px" width="31.5" height="18" viewBox="0 0 31.500 18" ><rect x=".6" y=".6" width="30.300" height="16.800" rx="3" fill="#b0c2d8" fill-opacity=".38" stroke="#a0afc3" stroke-width="1.100"/><rect x="11" y="5" width="10" height="8" fill="#fdfdfd" stroke="#5d6670" stroke-width="1.2"/><rect x="14" y="8" width="4" height="2.500" fill="#5d6670" opacity=".7"/></svg><svg class="a" style="left:740px;top:5.5px" width="31.5" height="18" viewBox="0 0 31.500 18" ><rect x=".6" y=".6" width="30.300" height="16.800" rx="3" fill="#b0c2d8" fill-opacity=".38" stroke="#a0afc3" stroke-width="1.100"/><path d="M11 5l10 8M21 5l-10 8" stroke="#5d6670" stroke-width="4.2"/><path d="M11 5l10 8M21 5l-10 8" stroke="#fdfdfd" stroke-width="2.2"/></svg><div class="stb" style="left:16px;top:36px;width:47px;height:376.5px;"></div><svg class="a" style="left:24.5px;top:43.5px" width="29.5" height="30" viewBox="0 0 30 30" ><path d="M2 0H25L30 5V28a2 2 0 0 1-2 2H2a2 2 0 0 1-2-2V2a2 2 0 0 1 2-2z" fill="#1f8fe6"/><rect x="5" y="0" width="18" height="10" fill="#fff"/><rect x="17.5" y="1.5" width="3.5" height="7" fill="#333"/><rect x="4.500" y="14" width="21" height="16" fill="#e6e6e6"/><path d="M7 18h16M7 22h16M7 26h16" stroke="#8a8a8a" stroke-width="1.6"/></svg><svg class="a" style="left:71px;top:37.5px" width="690" height="375" viewBox="32.5 277.3 311.1 169.1" preserveAspectRatio="none"><rect x="32.5" y="277.3" width="311.1" height="169.1" fill="#fff"/><path d="M93.75 283.55V430.1M137.6 283.55V430.1M181.45 283.55V430.1M225.3 283.55V430.1M269.15 283.55V430.1M313 283.55V430.1M58.4 399.4H337.4M58.4 366.2H337.4M58.4 333H337.4M58.4 299.8H337.4" stroke="#d6d6d6" stroke-width=".4" stroke-dasharray=".9 .9" fill="none"/><path d="M58.67 430.1v-0.9M67.44 430.1v-0.9M76.21 430.1v-0.9M84.98 430.1v-0.9M93.75 430.1v-1.7M102.52 430.1v-0.9M111.29 430.1v-0.9M120.06 430.1v-0.9M128.83 430.1v-0.9M137.6 430.1v-1.7M146.37 430.1v-0.9M155.14 430.1v-0.9M163.91 430.1v-0.9M172.68 430.1v-0.9M181.45 430.1v-1.7M190.22 430.1v-0.9M198.99 430.1v-0.9M207.76 430.1v-0.9M216.53 430.1v-0.9M225.3 430.1v-1.7M234.07 430.1v-0.9M242.84 430.1v-0.9M251.61 430.1v-0.9M260.38 430.1v-0.9M269.15 430.1v-1.7M277.92 430.1v-0.9M286.69 430.1v-0.9M295.46 430.1v-0.9M304.23 430.1v-0.9M313 430.1v-1.7M321.77 430.1v-0.9M330.54 430.1v-0.9M58.4 425.96h0.9M58.4 419.32h0.9M58.4 412.68h0.9M58.4 406.04h0.9M58.4 399.4h1.7M58.4 392.76h0.9M58.4 386.12h0.9M58.4 379.48h0.9M58.4 372.84h0.9M58.4 366.2h1.7M58.4 359.56h0.9M58.4 352.92h0.9M58.4 346.28h0.9M58.4 339.64h0.9M58.4 333h1.7M58.4 326.36h0.9M58.4 319.72h0.9M58.4 313.08h0.9M58.4 306.44h0.9M58.4 299.8h1.7M58.4 293.16h0.9M58.4 286.52h0.9M58.4 283.55v1.7M337.4 430.1h-1.7M72.35 283.55v0.9M337.4 422.77h-0.9M86.3 283.55v0.9M337.4 415.45h-0.9M100.25 283.55v0.9M337.4 408.12h-0.9M114.2 283.55v1.7M337.4 400.79h-1.7M128.15 283.55v0.9M337.4 393.46h-0.9M142.1 283.55v0.9M337.4 386.13h-0.9M156.05 283.55v0.9M337.4 378.81h-0.9M170 283.55v1.7M337.4 371.48h-1.7M183.95 283.55v0.9M337.4 364.15h-0.9M197.9 283.55v0.9M337.4 356.83h-0.9M211.85 283.55v0.9M337.4 349.5h-0.9M225.8 283.55v1.7M337.4 342.17h-1.7M239.75 283.55v0.9M337.4 334.84h-0.9M253.7 283.55v0.9M337.4 327.51h-0.9M267.65 283.55v0.9M337.4 320.19h-0.9M281.6 283.55v1.7M337.4 312.86h-1.7M295.55 283.55v0.9M337.4 305.53h-0.9M309.5 283.55v0.9M337.4 298.21h-0.9M323.45 283.55v0.9M337.4 290.88h-0.9M337.4 283.55v1.7M337.4 283.55h-1.7" stroke="#333" stroke-width=".45" fill="none"/><rect x="58.4" y="283.55" width="279" height="146.55" fill="none" stroke="#3a3a3a" stroke-width=".55"/><polyline points="58.67,430 128.83,430 133.22,412.3 137.6,402.1 141.98,391.2 146.37,376.8 150.75,361 155.14,345 159.52,333.5 163.91,316.5 168.29,315.2 172.68,299.5 177.06,293 181.45,288.8 185.83,296.5 190.22,288 194.6,283.7 198.99,291.3 203.38,290.3 207.76,299.8 212.14,316 216.53,329.5 220.91,346.5 225.3,360.5 229.69,362.8 234.07,369.8 238.45,379.5 242.84,377.3 247.22,385.5 251.61,390.3 256,399.7 260.38,408.8 264.76,417.4 269.15,422.4 273.53,430 337.12,430" fill="none" stroke="#f83a3a" stroke-width=".58" stroke-linejoin="round"/><text x="93.75" y="436.100" font-family='"Liberation Sans","Noto Sans CJK SC",sans-serif' font-size="4.600" text-anchor="middle" fill="#111" stroke="#111" stroke-width=".12">180</text><text x="137.6" y="436.100" font-family='"Liberation Sans","Noto Sans CJK SC",sans-serif' font-size="4.600" text-anchor="middle" fill="#111" stroke="#111" stroke-width=".12">190</text><text x="181.45" y="436.100" font-family='"Liberation Sans","Noto Sans CJK SC",sans-serif' font-size="4.600" text-anchor="middle" fill="#111" stroke="#111" stroke-width=".12">200</text><text x="225.3" y="436.100" font-family='"Liberation Sans","Noto Sans CJK SC",sans-serif' font-size="4.600" text-anchor="middle" fill="#111" stroke="#111" stroke-width=".12">210</text><text x="269.15" y="436.100" font-family='"Liberation Sans","Noto Sans CJK SC",sans-serif' font-size="4.600" text-anchor="middle" fill="#111" stroke="#111" stroke-width=".12">220</text><text x="313" y="436.100" font-family='"Liberation Sans","Noto Sans CJK SC",sans-serif' font-size="4.600" text-anchor="middle" fill="#111" stroke="#111" stroke-width=".12">230</text><text x="55.100" y="401" font-family='"Liberation Sans","Noto Sans CJK SC",sans-serif' font-size="4.600" text-anchor="end" fill="#111" stroke="#111" stroke-width=".12">7600</text><text x="55.100" y="367.8" font-family='"Liberation Sans","Noto Sans CJK SC",sans-serif' font-size="4.600" text-anchor="end" fill="#111" stroke="#111" stroke-width=".12">7700</text><text x="55.100" y="334.6" font-family='"Liberation Sans","Noto Sans CJK SC",sans-serif' font-size="4.600" text-anchor="end" fill="#111" stroke="#111" stroke-width=".12">7800</text><text x="55.100" y="301.4" font-family='"Liberation Sans","Noto Sans CJK SC",sans-serif' font-size="4.600" text-anchor="end" fill="#111" stroke="#111" stroke-width=".12">7900</text><text x="197" y="443.200" font-family='"Liberation Sans","Noto Sans CJK SC",sans-serif' font-size="4.900" text-anchor="middle" fill="#222">位置</text><text transform="translate(39.400 357) rotate(-90)" font-family='"Liberation Sans","Noto Sans CJK SC",sans-serif' font-size="4.900" text-anchor="middle" fill="#222">强度</text></svg></div><div class="sub ina" style="left:780.5px;top:577.5px;width:777px;height:430.5px;border:0;box-shadow:inset 0 0 0 1.500px #54595f,inset 0 0 0 3px #eef4fa"><div class="cl" style="left:9px;top:27px;width:760.5px;height:396px;"></div><svg class="a" style="left:10.5px;top:12.5px" width="14" height="12" viewBox="0 0 15 12" ><rect x=".8" y=".8" width="13.400" height="10.400" rx="1.500" fill="#f4f4f4" stroke="#333" stroke-width="1.300"/><path d="M.8 4h13.400M5.500 4v7M10 4v7" stroke="#333" stroke-width="1.100"/></svg><div class="t" style="left:30px;top:9.5px;width:147.5px;height:16px;color:#1b1b1b">计算结果</div><svg class="a" style="left:670.5px;top:5.5px" width="31.5" height="18" viewBox="0 0 31.500 18" ><rect x=".6" y=".6" width="30.300" height="16.800" rx="3" fill="#b0c2d8" fill-opacity=".38" stroke="#a0afc3" stroke-width="1.100"/><rect x="10.500" y="7.500" width="10.500" height="4.200" rx="1.200" fill="#fdfdfd" stroke="#5d6670" stroke-width="1.2"/></svg><svg class="a" style="left:705px;top:5.5px" width="31.5" height="18" viewBox="0 0 31.500 18" ><rect x=".6" y=".6" width="30.300" height="16.800" rx="3" fill="#b0c2d8" fill-opacity=".38" stroke="#a0afc3" stroke-width="1.100"/><rect x="11" y="5" width="10" height="8" fill="#fdfdfd" stroke="#5d6670" stroke-width="1.2"/><rect x="14" y="8" width="4" height="2.500" fill="#5d6670" opacity=".7"/></svg><svg class="a" style="left:739px;top:5.5px" width="31.5" height="18" viewBox="0 0 31.500 18" ><rect x=".6" y=".6" width="30.300" height="16.800" rx="3" fill="#b0c2d8" fill-opacity=".38" stroke="#a0afc3" stroke-width="1.100"/><path d="M11 5l10 8M21 5l-10 8" stroke="#5d6670" stroke-width="4.2"/><path d="M11 5l10 8M21 5l-10 8" stroke="#fdfdfd" stroke-width="2.2"/></svg><div class="stb" style="left:17.5px;top:36px;width:46.5px;height:376.5px;"></div><svg class="a" style="left:27px;top:44px" width="28" height="29.5" viewBox="0 0 30 30" ><path d="M2 0H25L30 5V28a2 2 0 0 1-2 2H2a2 2 0 0 1-2-2V2a2 2 0 0 1 2-2z" fill="#1f8fe6"/><rect x="5" y="0" width="18" height="10" fill="#fff"/><rect x="17.5" y="1.5" width="3.5" height="7" fill="#333"/><rect x="4.500" y="14" width="21" height="16" fill="#e6e6e6"/><path d="M7 18h16M7 22h16M7 26h16" stroke="#8a8a8a" stroke-width="1.6"/></svg><div style="left:71.5px;top:37px;width:686px;height:375.5px;background:#fff;border:1px solid #828790"></div><div style="left:72.5px;top:38px;width:15px;height:373.5px;background:#fff;border-right:1px solid #e0e0e0"></div><table style="left:87.5px;top:38px;width:669px"><tr style="background:#fff"><td style="width:100px;height:26px;">名称</td><td style="width:100px;height:26px;">值</td><td style="width:469px;height:26px;border-right:0;">单位</td></tr><tr style="background:#fff"><td style="width:100px;height:29.75px;border-bottom:1px solid #ededed;">长轴长</td><td style="width:100px;height:29.75px;border-bottom:1px solid #ededed;">0.686</td><td style="width:469px;height:29.75px;border-right:0;border-bottom:1px solid #ededed;">mm</td></tr><tr style="background:#f5f5f5"><td style="width:100px;height:29.75px;border-bottom:1px solid #ededed;">短轴长</td><td style="width:100px;height:29.75px;border-bottom:1px solid #ededed;">0.518</td><td style="width:469px;height:29.75px;border-right:0;border-bottom:1px solid #ededed;">mm</td></tr><tr style="background:#fff"><td style="width:100px;height:29.75px;border-bottom:1px solid #ededed;">面积</td><td style="width:100px;height:29.75px;border-bottom:1px solid #ededed;">0.279</td><td style="width:469px;height:29.75px;border-right:0;border-bottom:1px solid #ededed;">mm^2</td></tr><tr style="background:#f5f5f5"><td style="width:100px;height:29.75px;border-bottom:1px solid #ededed;">椭圆度</td><td style="width:100px;height:29.75px;border-bottom:1px solid #ededed;">0.756</td><td style="width:469px;height:29.75px;border-right:0;border-bottom:1px solid #ededed;"></td></tr><tr style="background:#fff"><td style="width:100px;height:29.75px;border-bottom:1px solid #ededed;">离心率</td><td style="width:100px;height:29.75px;border-bottom:1px solid #ededed;">0.655</td><td style="width:469px;height:29.75px;border-right:0;border-bottom:1px solid #ededed;"></td></tr><tr style="background:#f5f5f5"><td style="width:100px;height:29.75px;border-bottom:1px solid #ededed;">最大能量位置</td><td style="width:100px;height:29.75px;border-bottom:1px solid #ededed;">(203, 130)</td><td style="width:469px;height:29.75px;border-right:0;border-bottom:1px solid #ededed;">pixel</td></tr></table><div class="t" style="left:73.5px;top:70.5px;width:12px;height:16px;text-align:center;font-size:12.500px;color:#1a1a1a">1</div><div class="t" style="left:73.5px;top:100px;width:12px;height:16px;text-align:center;font-size:12.500px;color:#1a1a1a">2</div><div class="t" style="left:73.5px;top:130px;width:12px;height:16px;text-align:center;font-size:12.500px;color:#1a1a1a">3</div><div class="t" style="left:73.5px;top:159.5px;width:12px;height:16px;text-align:center;font-size:12.500px;color:#1a1a1a">4</div><div class="t" style="left:73.5px;top:189.5px;width:12px;height:16px;text-align:center;font-size:12.500px;color:#1a1a1a">5</div><div class="t" style="left:73.5px;top:219px;width:12px;height:16px;text-align:center;font-size:12.500px;color:#1a1a1a">6</div></div><div id="dock" style="left:0;top:0;width:1920px;height:1036px"><div style="left:1561.5px;top:95px;width:358.5px;height:913px;background:#f0f0f0"></div><div style="left:1561.5px;top:97px;width:358.5px;height:19px;background:#dbdbdb"></div><div class="t" style="left:1567px;top:99px;width:133px;height:15.5px;">光束设置</div><svg class="a" style="left:1882.5px;top:102px" width="9.5" height="9.5" viewBox="0 0 10 10" ><rect x="1" y="3.500" width="5.500" height="5.500" fill="none" stroke="#222" stroke-width="1.200"/><path d="M3.500 3.500V1h5.500v5.500H6.500" fill="none" stroke="#222" stroke-width="1.200"/></svg><svg class="a" style="left:1903px;top:102px" width="10" height="9.5" viewBox="0 0 10 10" ><path d="M1.500 1.500l7 7M8.500 1.500l-7 7" stroke="#222" stroke-width="1.500"/></svg><div class="gb" style="left:1571px;top:133px;width:340.5px;height:351px;"></div><div class="t" style="left:1579px;top:125px;width:52.5px;height:16px;background:#f0f0f0;padding-left:2px">参数设置</div><div class="cbc" style="left:1581px;top:150.5px;width:13px;height:12.5px;"></div><svg class="a" style="left:1581px;top:150.5px" width="13" height="12.5" viewBox="0 0 13 13" ><path d="M3.200 6.800l2.400 2.400l4.400-5" fill="none" stroke="#fff" stroke-width="1.400"/></svg><div class="t" style="left:1598.5px;top:149px;width:133.5px;height:15.5px;">手动阈值</div><div class="t r" style="left:1572.5px;top:172.5px;width:133px;height:16px;">背景阈值微调:</div><div class="in" style="left:1718px;top:172px;width:182px;height:18px;"></div><div class="t" style="left:1721.5px;top:173px;width:85.5px;height:16px;color:#1a1a1a">7508</div><svg class="a" style="left:1885.5px;top:172.5px" width="14" height="17" viewBox="0 0 14 17" ><rect x=".6" y=".6" width="12.800" height="15.800" rx="2" fill="#f1f1f1" stroke="#b4b4b4" stroke-width="1.100"/><path d="M3.600 7.200L7 3.200L10.400 7.200ZM3.600 9.800L7 13.800L10.400 9.800Z" fill="#111"/></svg><svg class="a" style="left:1720px;top:198.5px" width="174" height="5.5" viewBox="775.9 89.5 78.4 2.6" preserveAspectRatio="none"><path d="M776.9 89.5V92.1M778.46 89.5V92.1M780.02 89.5V92.1M781.58 89.5V92.1M783.14 89.5V92.1M784.7 89.5V92.1M786.26 89.5V92.1M787.81 89.5V92.1M789.37 89.5V92.1M790.93 89.5V92.1M792.49 89.5V92.1M794.05 89.5V92.1M795.61 89.5V92.1M797.17 89.5V92.1M798.73 89.5V92.1M800.29 89.5V92.1M801.85 89.5V92.1M803.41 89.5V92.1M804.97 89.5V92.1M806.52 89.5V92.1M808.08 89.5V92.1M809.64 89.5V92.1M811.2 89.5V92.1M812.76 89.5V92.1M814.32 89.5V92.1M815.88 89.5V92.1M817.44 89.5V92.1M819 89.5V92.1M820.56 89.5V92.1M822.12 89.5V92.1M823.68 89.5V92.1M825.23 89.5V92.1M826.79 89.5V92.1M828.35 89.5V92.1M829.91 89.5V92.1M831.47 89.5V92.1M833.03 89.5V92.1M834.59 89.5V92.1M836.15 89.5V92.1M837.71 89.5V92.1M839.27 89.5V92.1M840.83 89.5V92.1M842.39 89.5V92.1M843.94 89.5V92.1M845.5 89.5V92.1M847.06 89.5V92.1M848.62 89.5V92.1M850.18 89.5V92.1M851.74 89.5V92.1M853.3 89.5V92.1" stroke="#a8a8a8" stroke-width=".5" fill="none"/></svg><div class="t r" style="left:1572.5px;top:203.5px;width:133px;height:16px;">背景阈值粗调:</div><div class="gr" style="left:1718px;top:210.5px;width:182px;height:3px;"></div><div class="hd" style="left:1738px;top:202.5px;width:11.5px;height:19.5px;"></div><div class="cb" style="left:1581px;top:231px;width:13px;height:13px;"></div><div class="t" style="left:1598.5px;top:229.5px;width:133.5px;height:16px;">分段线性灰度拉伸:</div><div style="left:1768px;top:230px;width:132px;height:66.5px;border:1px solid #dedede;border-top:2px solid #6e6e6e;border-left:2px solid #6e6e6e;background:#f0f0f0"></div><div class="t r" style="left:1578.5px;top:254px;width:133px;height:16px;">灰度2</div><div class="ind" style="left:1718px;top:253.5px;width:42.5px;height:17px;"></div><div class="t" style="left:1721.5px;top:254px;width:133px;height:16px;color:#9c9c9c">255</div><div class="t r" style="left:1578.5px;top:279.5px;width:133px;height:16px;">灰度1</div><div class="ind" style="left:1718px;top:279px;width:42.5px;height:17px;"></div><div class="t" style="left:1721.5px;top:279.5px;width:133px;height:16px;color:#9c9c9c">0</div><div class="cb" style="left:1581px;top:307.5px;width:13px;height:13px;"></div><div class="t" style="left:1598.5px;top:306px;width:133.5px;height:16px;">等能量显示</div><div class="t" style="left:1725.5px;top:306px;width:133px;height:16px;">下限值</div><div class="ind" style="left:1764.5px;top:305.5px;width:42.5px;height:17.5px;"></div><div class="t" style="left:1769px;top:306px;width:133.5px;height:16px;color:#9c9c9c">30</div><div class="t" style="left:1816px;top:306px;width:133.5px;height:16px;">上限值</div><div class="ind" style="left:1855.5px;top:305.5px;width:45px;height:17.5px;"></div><div class="t" style="left:1861px;top:306px;width:133px;height:16px;color:#9c9c9c">100</div><svg class="a" style="left:1720px;top:332.5px" width="174" height="5" viewBox="775.9 149.9 78.4 2.4" preserveAspectRatio="none"><path d="M776.9 149.9V152.3M780.72 149.9V152.3M784.54 149.9V152.3M788.36 149.9V152.3M792.18 149.9V152.3M796 149.9V152.3M799.82 149.9V152.3M803.64 149.9V152.3M807.46 149.9V152.3M811.28 149.9V152.3M815.1 149.9V152.3M818.92 149.9V152.3M822.74 149.9V152.3M826.56 149.9V152.3M830.38 149.9V152.3M834.2 149.9V152.3M838.02 149.9V152.3M841.84 149.9V152.3M845.66 149.9V152.3M849.48 149.9V152.3M853.3 149.9V152.3" stroke="#a8a8a8" stroke-width=".5" fill="none"/></svg><div class="t" style="left:1581px;top:337px;width:133px;height:16px;">自动拉伸亮度:</div><div class="gr" style="left:1718px;top:344.5px;width:182px;height:3px;"></div><div class="hd" style="left:1804px;top:337px;width:11px;height:19.5px;"></div><svg class="a" style="left:1720px;top:365px" width="174" height="5.5" viewBox="775.9 164.6 78.4 2.5" preserveAspectRatio="none"><path d="M776.9 164.6V167.1M780.72 164.6V167.1M784.54 164.6V167.1M788.36 164.6V167.1M792.18 164.6V167.1M796 164.6V167.1M799.82 164.6V167.1M803.64 164.6V167.1M807.46 164.6V167.1M811.28 164.6V167.1M815.1 164.6V167.1M818.92 164.6V167.1M822.74 164.6V167.1M826.56 164.6V167.1M830.38 164.6V167.1M834.2 164.6V167.1M838.02 164.6V167.1M841.84 164.6V167.1M845.66 164.6V167.1M849.48 164.6V167.1M853.3 164.6V167.1" stroke="#a8a8a8" stroke-width=".5" fill="none"/></svg><div class="t" style="left:1581px;top:370px;width:133px;height:16px;">自动拉伸对比度:</div><div class="gr" style="left:1718px;top:378px;width:182px;height:3px;"></div><div class="hd" style="left:1804px;top:370px;width:11px;height:19.5px;"></div><div class="t" style="left:1581px;top:398.5px;width:133px;height:16px;">曝光策略:</div><div class="in" style="left:1718px;top:397px;width:182.5px;height:19px;"></div><div class="t" style="left:1722px;top:398.5px;width:85px;height:16px;color:#1a1a1a">待校正</div><svg class="a" style="left:1886.5px;top:403px" width="10" height="6.5" viewBox="0 0 10 6" ><path d="M1 1L5 5L9 1" fill="none" stroke="#555" stroke-width="1.300"/></svg><svg class="a" style="left:1720px;top:424.5px" width="174" height="5.5" viewBox="775.9 191.5 78.4 2.4" preserveAspectRatio="none"><path d="M776.9 191.5V193.9M778.46 191.5V193.9M780.02 191.5V193.9M781.58 191.5V193.9M783.14 191.5V193.9M784.7 191.5V193.9M786.26 191.5V193.9M787.81 191.5V193.9M789.37 191.5V193.9M790.93 191.5V193.9M792.49 191.5V193.9M794.05 191.5V193.9M795.61 191.5V193.9M797.17 191.5V193.9M798.73 191.5V193.9M800.29 191.5V193.9M801.85 191.5V193.9M803.41 191.5V193.9M804.97 191.5V193.9M806.52 191.5V193.9M808.08 191.5V193.9M809.64 191.5V193.9M811.2 191.5V193.9M812.76 191.5V193.9M814.32 191.5V193.9M815.88 191.5V193.9M817.44 191.5V193.9M819 191.5V193.9M820.56 191.5V193.9M822.12 191.5V193.9M823.68 191.5V193.9M825.23 191.5V193.9M826.79 191.5V193.9M828.35 191.5V193.9M829.91 191.5V193.9M831.47 191.5V193.9M833.03 191.5V193.9M834.59 191.5V193.9M836.15 191.5V193.9M837.71 191.5V193.9M839.27 191.5V193.9M840.83 191.5V193.9M842.39 191.5V193.9M843.94 191.5V193.9M845.5 191.5V193.9M847.06 191.5V193.9M848.62 191.5V193.9M850.18 191.5V193.9M851.74 191.5V193.9M853.3 191.5V193.9" stroke="#c6c6c6" stroke-width=".5" fill="none"/></svg><div class="t" style="left:1581px;top:429.5px;width:133px;height:16px;">手动曝光:</div><div class="gr" style="left:1718px;top:436.5px;width:182px;height:3px;background:#dadada"></div><div class="hdd" style="left:1718.5px;top:429px;width:11px;height:19.5px;"></div><div class="t" style="left:1581px;top:458px;width:133px;height:16px;">探测器增益:</div><div class="in" style="left:1718px;top:456.5px;width:182px;height:18px;"></div><div class="t" style="left:1721.5px;top:457.5px;width:85.5px;height:16px;color:#1a1a1a">0</div><svg class="a" style="left:1885.5px;top:457px" width="14" height="17" viewBox="0 0 14 17" ><rect x=".6" y=".6" width="12.800" height="15.800" rx="2" fill="#f1f1f1" stroke="#b4b4b4" stroke-width="1.100"/><path d="M3.600 7.200L7 3.200L10.400 7.200ZM3.600 9.800L7 13.800L10.400 9.800Z" fill="#111"/></svg><div class="gb" style="left:1571px;top:505.5px;width:340.5px;height:89.5px;border-color:#e2e2e2;box-shadow:2px 2px 3px rgba(0,0,0,.08)"></div><div class="t" style="left:1581px;top:517px;width:133px;height:16px;">像素尺寸:</div><div class="in" style="left:1731.5px;top:516px;width:142px;height:18.5px;"></div><div class="t" style="left:1735.5px;top:517px;width:84.5px;height:16px;color:#1a1a1a">22</div><svg class="a" style="left:1860px;top:522px" width="9.5" height="6.5" viewBox="0 0 10 6" ><path d="M1 1L5 5L9 1" fill="none" stroke="#555" stroke-width="1.300"/></svg><div class="t" style="left:1880px;top:517px;width:133px;height:16px;font-size:9.500px;color:#333">um</div><div class="t" style="left:1581px;top:542.5px;width:133px;height:16px;">激光波长:</div><div class="in" style="left:1731.5px;top:542px;width:140px;height:18px;"></div><div class="t" style="left:1734.5px;top:543px;width:85.5px;height:16px;color:#1a1a1a">0</div><svg class="a" style="left:1857px;top:542.5px" width="14" height="16.5" viewBox="0 0 14 17" ><rect x=".6" y=".6" width="12.800" height="15.800" rx="2" fill="#f1f1f1" stroke="#b4b4b4" stroke-width="1.100"/><path d="M3.600 7.200L7 3.200L10.400 7.200ZM3.600 9.800L7 13.800L10.400 9.800Z" fill="#111"/></svg><div class="t" style="left:1880px;top:542.5px;width:133px;height:16px;font-size:9.500px;color:#333">nm</div><div class="t" style="left:1581px;top:568px;width:133px;height:16px;">激光功率输入:</div><div class="in" style="left:1731.5px;top:567.5px;width:140px;height:18px;"></div><div class="t" style="left:1734.5px;top:568.5px;width:85.5px;height:16px;color:#1a1a1a">0</div><svg class="a" style="left:1857px;top:568px" width="14" height="16.5" viewBox="0 0 14 17" ><rect x=".6" y=".6" width="12.800" height="15.800" rx="2" fill="#f1f1f1" stroke="#b4b4b4" stroke-width="1.100"/><path d="M3.600 7.200L7 3.200L10.400 7.200ZM3.600 9.800L7 13.800L10.400 9.800Z" fill="#111"/></svg><div class="t" style="left:1880px;top:568px;width:133px;height:16px;font-size:9.500px;color:#333">mW</div></div><div style="left:0px;top:1008px;width:1920px;height:23px;background:#fff"></div><div style="left:0px;top:1031px;width:1920px;height:5.5px;background:linear-gradient(#e3ebee,#d5e0e6)"></div></div></body></html>
